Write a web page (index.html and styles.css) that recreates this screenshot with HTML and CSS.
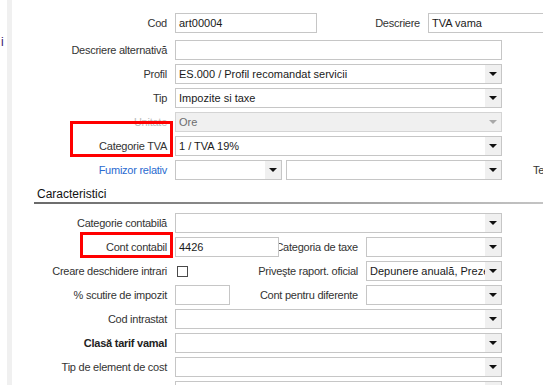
FILE: index.html
```html
<!DOCTYPE html>
<html lang="ro">
  <head>
    <meta charset="UTF-8" />
    <title>Articol - TVA vama</title>
    <link rel="stylesheet" href="styles.css">
  </head>
  <body>
    <div class="window">
      <div class="gutter"><span class="gutter-text">i</span></div>
      <div class="strip"></div>

      <main class="form">
        <div class="row row-first">
          <label class="label">Cod</label>
          <div class="input w-cod">art00004</div>
          <label class="label-right">Descriere</label>
          <div class="input w-desc">TVA vama</div>
        </div>

        <div class="row">
          <label class="label">Descriere alternativă</label>
          <div class="input w-full"></div>
        </div>

        <div class="row">
          <label class="label">Profil</label>
          <div class="select w-full">
            <span class="select-value">ES.000 / Profil recomandat servicii</span>
            <span class="select-arrow"><i class="tri"></i></span>
          </div>
        </div>

        <div class="row">
          <label class="label">Tip</label>
          <div class="select w-full">
            <span class="select-value">Impozite si taxe</span>
            <span class="select-arrow"><i class="tri"></i></span>
          </div>
        </div>

        <div class="row">
          <label class="label disabled">Unitate</label>
          <div class="select w-full is-disabled">
            <span class="select-value">Ore</span>
            <span class="select-arrow"><i class="tri"></i></span>
          </div>
        </div>

        <div class="row">
          <label class="label">Categorie TVA</label>
          <div class="select w-full">
            <span class="select-value">1 / TVA 19%</span>
            <span class="select-arrow"><i class="tri"></i></span>
          </div>
        </div>

        <div class="row">
          <label class="label link">Fumizor relativ</label>
          <div class="select w-small">
            <span class="select-value"></span>
            <span class="select-arrow"><i class="tri"></i></span>
          </div>
          <div class="select w-rest">
            <span class="select-value"></span>
            <span class="select-arrow"><i class="tri"></i></span>
          </div>
          <span class="cut-label">Te</span>
        </div>

        <div class="section-title">Caracteristici</div>

        <div class="row">
          <label class="label">Categorie contabilă</label>
          <div class="select w-full">
            <span class="select-value"></span>
            <span class="select-arrow"><i class="tri"></i></span>
          </div>
        </div>

        <div class="row">
          <label class="label">Cont contabil</label>
          <div class="cell">
            <div class="input w-cell on-top">4426</div>
          </div>
          <label class="label-mid">Categoria de taxe</label>
          <div class="select w-mid">
            <span class="select-value"></span>
            <span class="select-arrow"><i class="tri"></i></span>
          </div>
        </div>

        <div class="row">
          <label class="label">Creare deschidere intrari</label>
          <div class="cell">
            <span class="checkbox"></span>
          </div>
          <label class="label-mid">Priveşte raport. oficial</label>
          <div class="select w-mid">
            <span class="select-value">Depunere anuală, Prezentare anuală</span>
            <span class="select-arrow"><i class="tri"></i></span>
          </div>
        </div>

        <div class="row">
          <label class="label">% scutire de impozit</label>
          <div class="cell">
            <div class="input w-pct"></div>
          </div>
          <label class="label-mid">Cont pentru diferente</label>
          <div class="select w-mid">
            <span class="select-value"></span>
            <span class="select-arrow"><i class="tri"></i></span>
          </div>
        </div>

        <div class="row">
          <label class="label">Cod intrastat</label>
          <div class="select w-full">
            <span class="select-value"></span>
            <span class="select-arrow"><i class="tri"></i></span>
          </div>
        </div>

        <div class="row">
          <label class="label bold">Clasă tarif vamal</label>
          <div class="select w-full">
            <span class="select-value"></span>
            <span class="select-arrow"><i class="tri"></i></span>
          </div>
        </div>

        <div class="row">
          <label class="label">Tip de element de cost</label>
          <div class="select w-full">
            <span class="select-value"></span>
            <span class="select-arrow"><i class="tri"></i></span>
          </div>
        </div>

        <div class="row">
          <label class="label"></label>
          <div class="select w-full">
            <span class="select-value"></span>
            <span class="select-arrow"><i class="tri"></i></span>
          </div>
        </div>
      </main>

      <!-- highlight boxes drawn over the form -->
      <div class="mark mark-tva"></div>
      <div class="mark mark-cont"></div>
    </div>
  </body>
</html>
```

FILE: styles.css
```css
* {
  margin: 0;
  padding: 0;
  box-sizing: border-box;
}

body {
  font-family: "Liberation Sans", Arial, sans-serif;
  font-size: 11px;
  color: #333333;
  background-color: #ffffff;
  overflow: hidden;
}

.window {
  position: relative;
  display: flex;
  width: 543px;
  height: 385px;
  overflow: hidden;
}

.gutter {
  flex: none;
  width: 7px;
  padding-top: 35px;
}

.gutter-text {
  display: block;
  margin-left: 1px;
  font-size: 12px;
  color: #3a1870;
}

.strip {
  flex: none;
  width: 5px;
  background-color: #f0f0f0;
}

.form {
  flex: 1;
  min-width: 0;
  padding-top: 13px;
}

.row {
  display: flex;
  align-items: center;
  height: 20px;
  margin-bottom: 4px;
  white-space: nowrap;
}

.row-first {
  margin-bottom: 7px;
}

.label {
  flex: none;
  width: 155px;
  margin-right: 8px;
  text-align: right;
  letter-spacing: -0.25px;
}

.label.disabled {
  color: #b9b9b9;
}

.label.link {
  color: #2a6bd0;
}

.label.bold {
  font-weight: bold;
  color: #222222;
}

.label-right {
  flex: none;
  width: 103px;
  margin-right: 8px;
  text-align: right;
  letter-spacing: -0.25px;
}

.label-mid {
  flex: none;
  display: flex;
  justify-content: flex-end;
  width: 79px;
  margin-right: 8px;
  letter-spacing: -0.25px;
}

.cut-label {
  margin-left: 31px;
  letter-spacing: -0.25px;
}

.input,
.select {
  flex: none;
  height: 20px;
  border: 1px solid #c6c6c6;
  background-color: #ffffff;
  color: #1a1a1a;
  line-height: 18px;
}

.input {
  padding: 0 3px;
}

.on-top {
  position: relative;
  z-index: 1;
}

.select {
  display: flex;
}

.select-value {
  flex: 1;
  padding: 0 3px;
  overflow: hidden;
}

.select-arrow {
  width: 16px;
  display: flex;
  align-items: center;
  justify-content: center;
  background-color: #f0f0f0;
}

.tri {
  width: 0;
  height: 0;
  border-left: 4px solid transparent;
  border-right: 4px solid transparent;
  border-top: 4px solid #111111;
}

.is-disabled {
  background-color: #f0f0f0;
  border-color: #d4d4d4;
}

.is-disabled .select-value {
  color: #6d6d6d;
}

.is-disabled .tri {
  border-top-color: #a8a8a8;
}

.w-cod { width: 142px; }
.w-desc { width: 130px; }
.w-full { width: 327px; }
.w-small { width: 107px; margin-right: 4px; }
.w-rest { width: 216px; }
.w-cell { width: 104px; }
.w-pct { width: 55px; }
.w-mid { width: 136px; }

.cell {
  flex: none;
  width: 104px;
  display: flex;
  align-items: center;
}

.checkbox {
  width: 11px;
  height: 11px;
  margin-left: 2px;
  border: 1px solid #4a4a4a;
  background-color: #ffffff;
}

.section-title {
  height: 20px;
  margin: 0 0 9px 22px;
  padding: 2px 0 0 3px;
  font-size: 12px;
  line-height: 16px;
  color: #111111;
  border-bottom: 2px solid transparent;
  border-image: linear-gradient(to right, #6a6a6a, #c4c4c4) 1;
}

.mark {
  position: absolute;
  border: 3px solid #ff0000;
}

.mark-tva {
  left: 70px;
  top: 121px;
  width: 103px;
  height: 36px;
}

.mark-cont {
  left: 80px;
  top: 232px;
  width: 93px;
  height: 26px;
}
```
